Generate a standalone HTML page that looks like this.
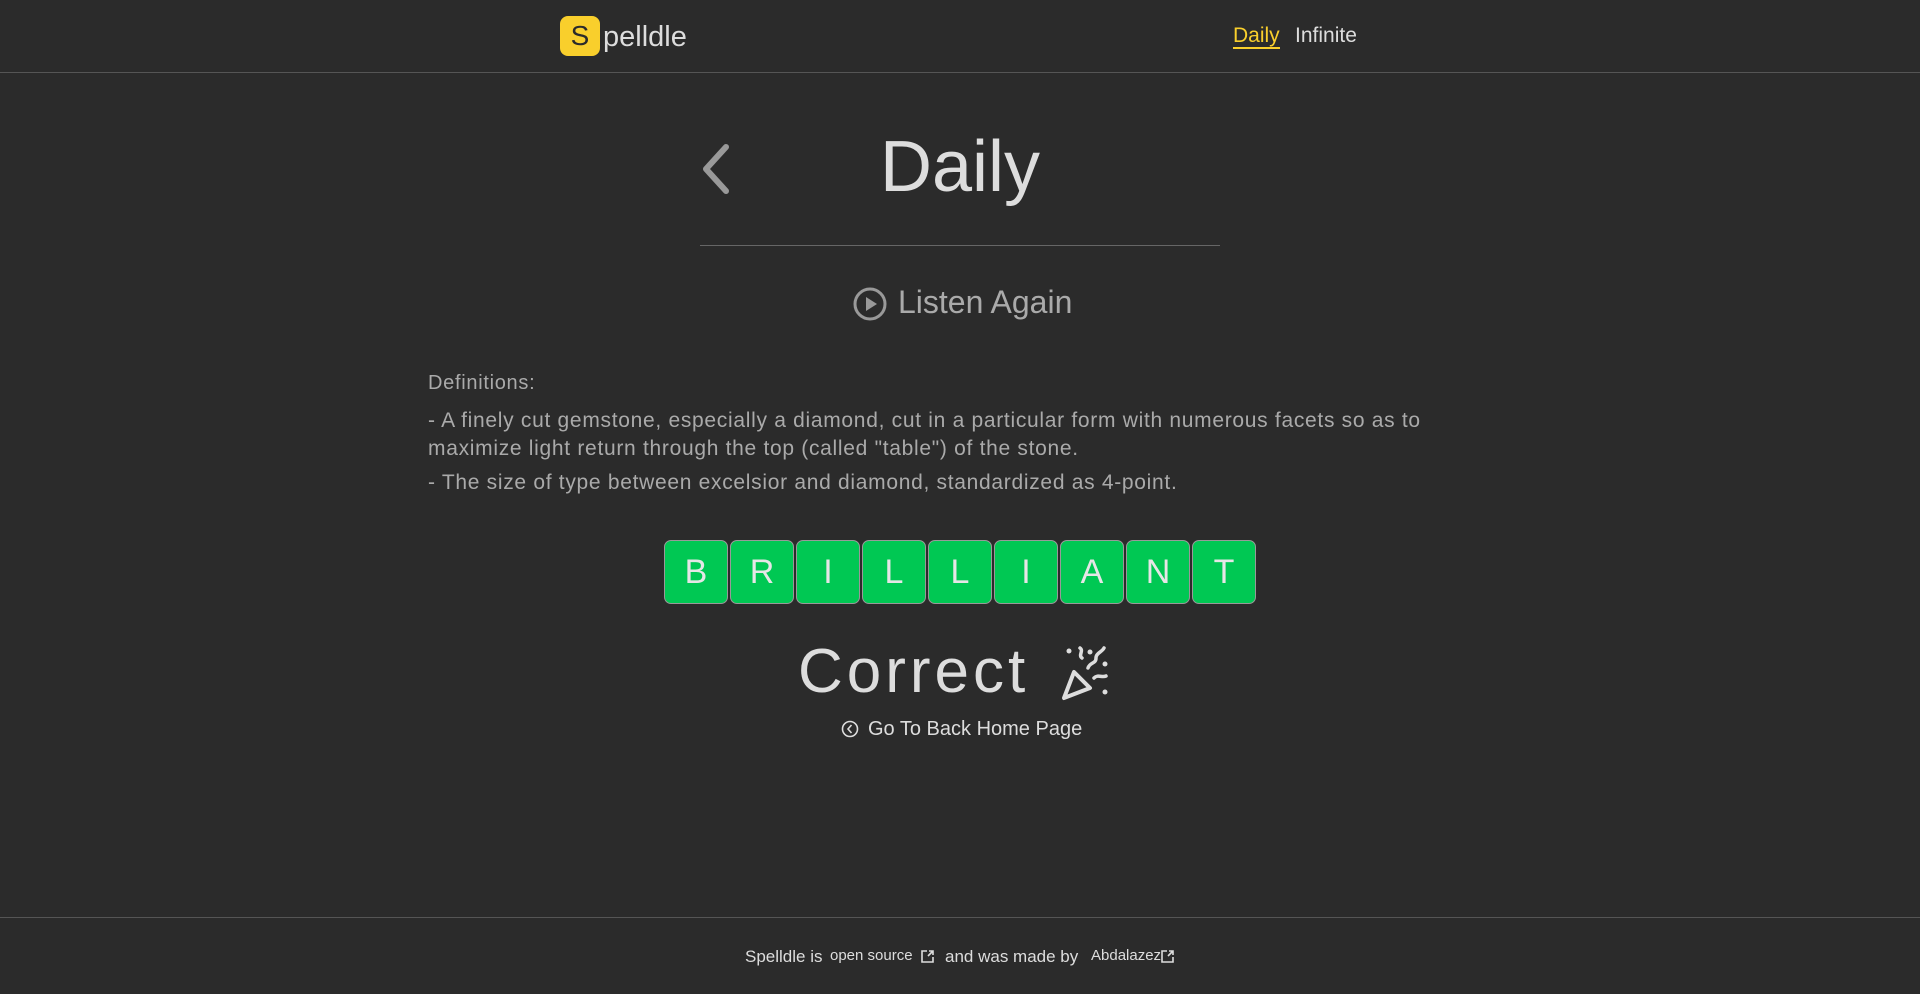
<!DOCTYPE html>
<html><head><meta charset="utf-8"><style>
*{margin:0;padding:0;box-sizing:border-box}
body{width:1920px;height:994px;background:#2b2b2b;font-family:"Liberation Sans",sans-serif;color:#ddd;position:relative;overflow:hidden}
.hdr{position:absolute;top:0;left:0;width:1920px;height:73px;border-bottom:1px solid #555}
.logo{position:absolute;left:560px;top:16px;width:40px;height:40px;background:#f9cf2c;border-radius:8px;color:#2b2b2b;font-size:28px;text-align:center;line-height:40px}
.logot{position:absolute;left:603px;top:17px;font-size:29px;color:#ddd;line-height:40px}
.nav{position:absolute;top:25px;font-size:21px}
.a{position:absolute;white-space:nowrap}
.tile{position:absolute;top:540px;width:64px;height:64px;background:#00c853;border:1px solid #999;border-radius:7px;color:#e6e6e6;font-size:34px;text-align:center;line-height:62px}
.foot{position:absolute;top:917px;left:0;width:1920px;border-top:1px solid #555}
.d{font-size:21px;color:#aaa;letter-spacing:0.7px}
</style></head><body>
<div class="hdr"></div>
<div class="logo">S</div><div class="logot">pelldle</div>
<div class="nav" style="left:1233px;color:#f9cf2c;border-bottom:2px solid #f9cf2c;line-height:22px">Daily</div>
<div class="nav" style="left:1295px;line-height:22px">Infinite</div>
<svg class="a" style="left:700px;top:143px" width="32" height="52" viewBox="0 0 32 52"><path d="M26 4 L6 26 L26 48" stroke="#999" stroke-width="6" fill="none" stroke-linecap="round" stroke-linejoin="round"/></svg>
<div class="a" style="left:0;width:1920px;text-align:center;top:126px;font-size:72px;color:#ddd">Daily</div>
<div class="a" style="left:700px;top:245px;width:520px;height:1px;background:#666"></div>
<svg class="a" style="left:853px;top:287px" width="34" height="34" viewBox="0 0 34 34"><circle cx="17" cy="17" r="15" stroke="#999" stroke-width="3" fill="none"/><path d="M13 10 L24 17 L13 24Z" fill="#999"/></svg>
<div class="a" style="left:898px;top:284px;font-size:32px;color:#aaa">Listen Again</div>
<div class="a d" style="left:428px;top:372px;font-size:20px">Definitions:</div>
<div class="a d" style="left:428px;top:407px;line-height:28px">- A finely cut gemstone, especially a diamond, cut in a particular form with numerous facets so as to<br>maximize light return through the top (called "table") of the stone.</div>
<div class="a d" style="left:428px;top:471px">- The size of type between excelsior and diamond, standardized as 4-point.</div>
<div class="tile" style="left:664px">B</div><div class="tile" style="left:730px">R</div><div class="tile" style="left:796px">I</div><div class="tile" style="left:862px">L</div><div class="tile" style="left:928px">L</div><div class="tile" style="left:994px">I</div><div class="tile" style="left:1060px">A</div><div class="tile" style="left:1126px">N</div><div class="tile" style="left:1192px">T</div>
<div class="a" style="left:798px;top:636px;font-size:62px;color:#ddd;letter-spacing:4px">Correct</div>
<svg class="a" style="left:1060px;top:642px" width="60" height="60" viewBox="0 0 60 60"><path d="M4 56 L14 30 L30 46 Z" stroke="#ddd" stroke-width="4" fill="none" stroke-linejoin="round"/><circle cx="9" cy="9" r="2.5" fill="#ddd"/><circle cx="30" cy="10" r="2.5" fill="#ddd"/><circle cx="45" cy="22" r="2.5" fill="#ddd"/><circle cx="45" cy="50" r="2.5" fill="#ddd"/><path d="M20 6 c4 3 -2 7 2 10 M28 26 c2 -6 8 -4 8 -10 c0 -5 6 -6 8 -10 M34 36 c4 -4 8 0 12 -2" stroke="#ddd" stroke-width="3.5" fill="none" stroke-linecap="round"/></svg>
<svg class="a" style="left:841px;top:720px" width="18" height="18" viewBox="0 0 18 18"><circle cx="9" cy="9" r="7.5" stroke="#ddd" stroke-width="1.6" fill="none"/><path d="M10.5 5 L7 9 L10.5 13" stroke="#ddd" stroke-width="1.6" fill="none"/></svg>
<div class="a" style="left:868px;top:718px;font-size:20px;color:#ddd">Go To Back Home Page</div>
<div class="foot"></div>
<div class="a" style="left:745px;top:947px;font-size:17px;color:#ddd">Spelldle is</div>
<div class="a" style="left:830px;top:947px;font-size:15px;color:#ddd">open source</div>
<svg class="a" style="left:920px;top:949px" width="15" height="15" viewBox="0 0 15 15"><path d="M7 2H2V13H13V8 M8 7L13 2 M9 2H13V6" stroke="#ddd" stroke-width="1.6" fill="none"/></svg>
<div class="a" style="left:945px;top:947px;font-size:17px;color:#ddd">and was made by</div>
<div class="a" style="left:1091px;top:947px;font-size:15px;color:#ddd">Abdalazez</div>
<svg class="a" style="left:1160px;top:949px" width="15" height="15" viewBox="0 0 15 15"><path d="M7 2H2V13H13V8 M8 7L13 2 M9 2H13V6" stroke="#ddd" stroke-width="1.6" fill="none"/></svg>
</body></html>
